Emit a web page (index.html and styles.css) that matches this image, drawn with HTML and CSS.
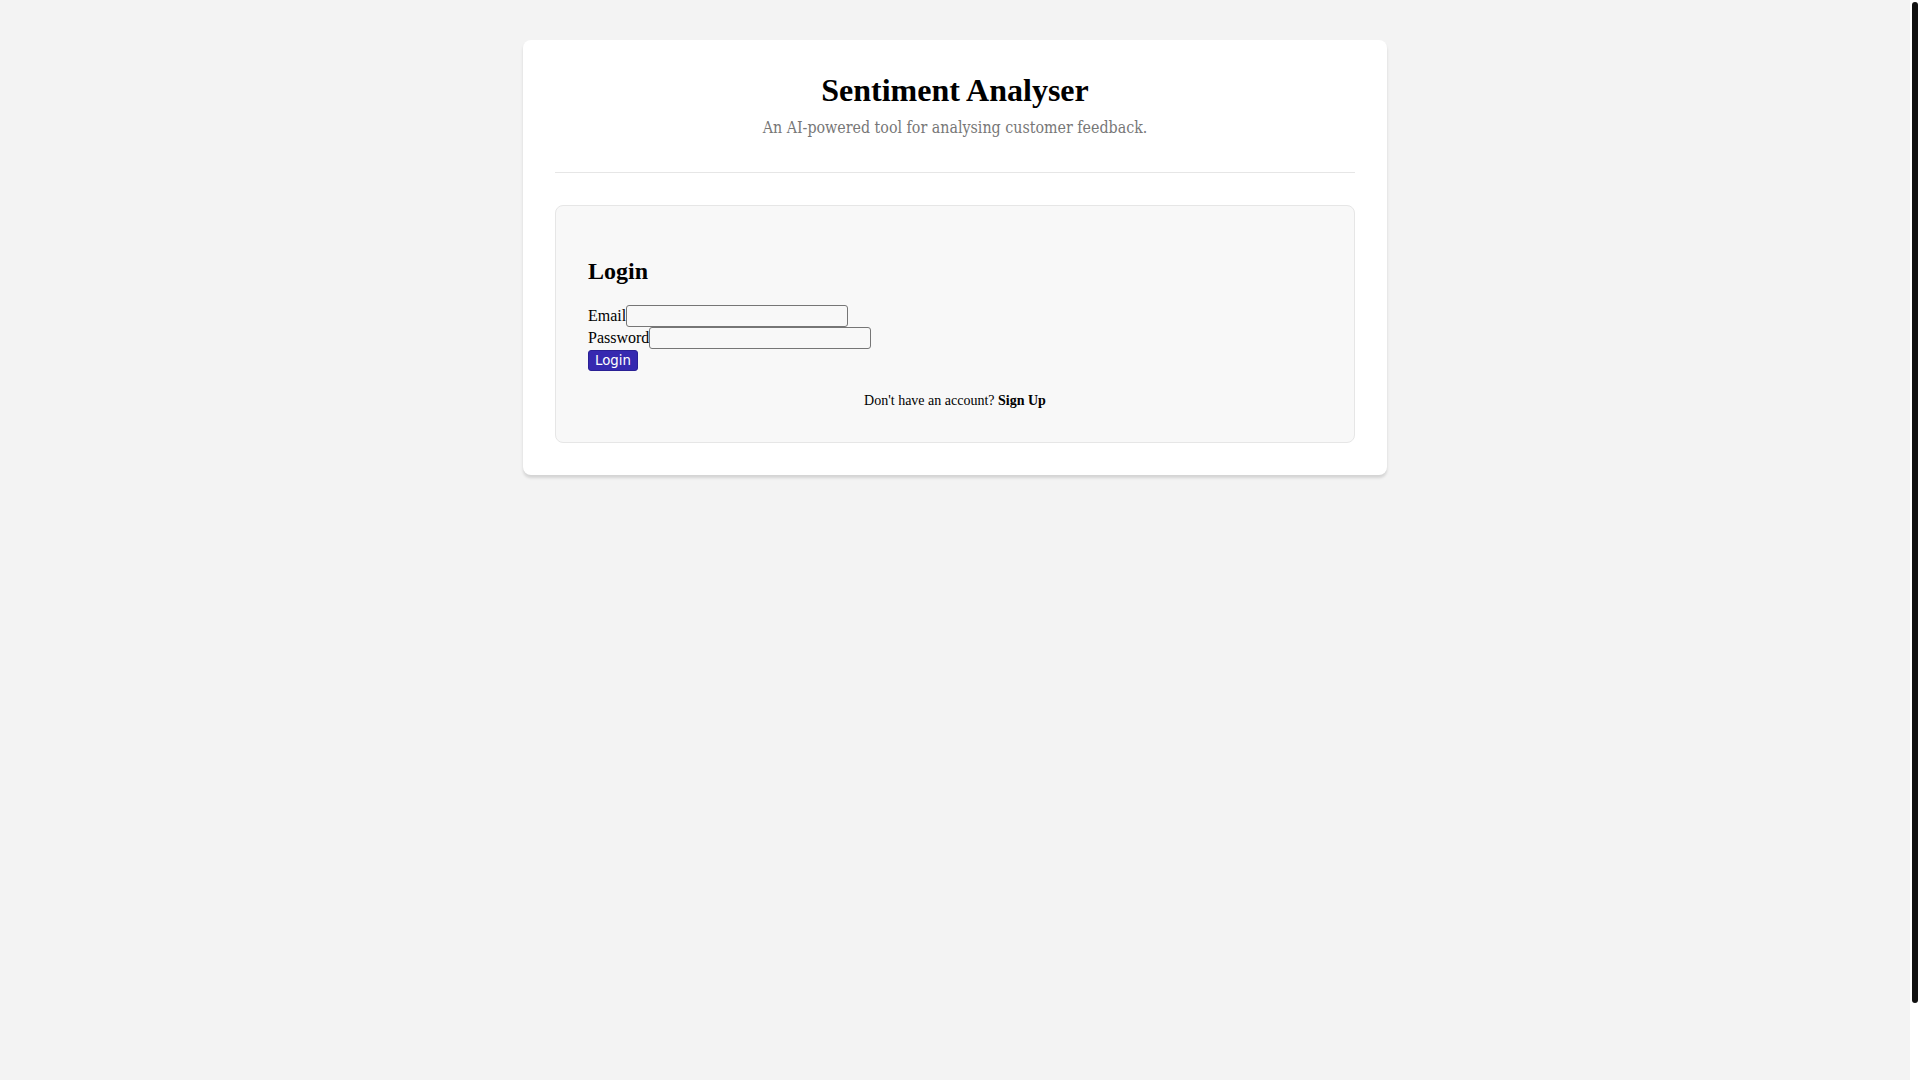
FILE: index.html
```html
<!DOCTYPE html>
<html lang="en">
<head>
<meta charset="utf-8">
<title>Sentiment Analyser</title>
<link rel="stylesheet" href="styles.css">
</head>
<body>
<main class="card">
  <header class="header">
    <h1 class="title">Sentiment Analyser</h1>
    <p class="subtitle">An AI-powered tool for analysing customer feedback.</p>
  </header>
  <section class="auth-box">
    <h2 class="auth-title">Login</h2>
    <form class="auth-form">
      <div class="field"><label class="label" for="email">Email</label><input class="input" id="email" type="email"></div>
      <div class="field"><label class="label" for="password">Password</label><input class="input" id="password" type="password"></div>
      <div class="field"><button class="btn" type="button">Login</button></div>
    </form>
    <p class="switch">Don't have an account? <a class="switch-link" href="#">Sign Up</a></p>
  </section>
</main>
<div class="scrollbar" aria-hidden="true"><div class="scrollbar-thumb"></div></div>
</body>
</html>
```
FILE: styles.css
```css
html {
  background: #f3f3f3;
  overflow: hidden;
}
body {
  margin: 0 10px 0 0;
  padding: 40px;
  min-height: 100vh;
  background: #f3f3f3;
  font-family: "Liberation Serif", "Times New Roman", serif;
  font-size: 16px;
  color: #000;
}
.card {
  display: block;
  max-width: 800px;
  margin: 0 auto;
  padding: 32px;
  background: #ffffff;
  border-radius: 8px;
  box-shadow: 0 3px 3px rgba(0, 0, 0, 0.13);
}
.header {
  text-align: center;
  border-bottom: 1px solid #e6e6e6;
  padding-bottom: 34px;
  margin-bottom: 32px;
}
.title {
  margin: 0;
  font-size: 32px;
  font-weight: bold;
  line-height: 37px;
}
.subtitle {
  margin: 10px 0 0;
  font-family: "DejaVu Serif", serif;
  font-stretch: condensed;
  font-size: 15.85px;
  line-height: 18.6px;
  color: #777777;
}
.auth-box {
  background: #f8f8f8;
  border: 1px solid #e6e6e6;
  border-radius: 8px;
  padding: 32px 32px 33px;
}
.auth-title {
  margin: 20px 0 20px;
  font-size: 24px;
  font-weight: bold;
  line-height: 27.5px;
}
.auth-form {
  margin: 0;
}
.field {
  height: 22px;
  display: flex;
  align-items: center;
}
.label {
  font-size: 16px;
}
.input {
  box-sizing: border-box;
  width: 222px;
  height: 21.5px;
  margin: 0;
  padding: 1px 2px;
  border: 1px solid #767676;
  border-radius: 3px;
  background: #f8f8f8;
  font-size: 13px;
}
.btn {
  box-sizing: border-box;
  height: 21px;
  width: 50px;
  padding: 0;
  border: 1px solid #2a2095;
  border-radius: 3px;
  background: #3629b0;
  color: #ffffff;
  font-family: "DejaVu Sans", sans-serif;
  font-size: 13.33px;
}
.switch {
  margin: 22px 0 0;
  text-align: center;
  font-size: 14px;
}
.switch-link {
  color: #000;
  font-weight: bold;
  text-decoration: none;
}
.scrollbar {
  position: fixed;
  top: 0;
  right: 0;
  bottom: 0;
  width: 10px;
  background: #ffffff;
}
.scrollbar-thumb {
  position: absolute;
  top: 2px;
  left: 2px;
  width: 5.5px;
  height: 1001px;
  background: #111111;
  border-radius: 3px;
}
```
